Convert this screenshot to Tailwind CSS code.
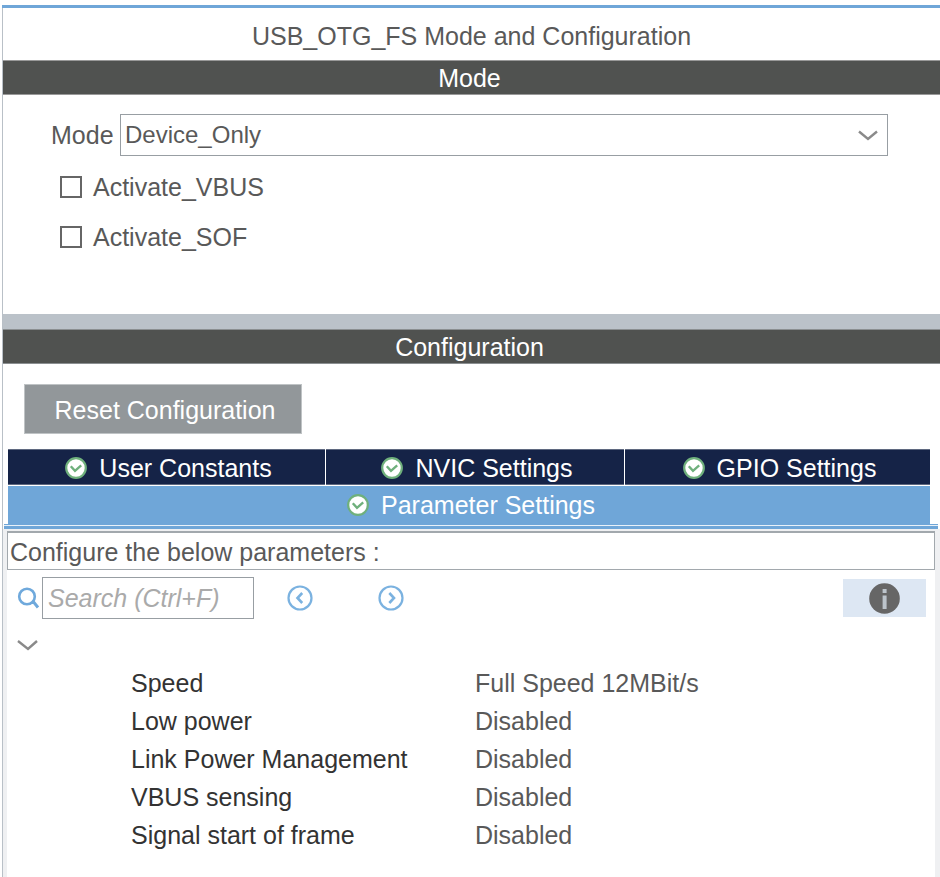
<!DOCTYPE html>
<html lang="en">
<head>
<meta charset="utf-8">
<title>USB_OTG_FS Mode and Configuration</title>
<script src="https://cdn.jsdelivr.net/npm/@tailwindcss/browser@4"></script>
</head>
<body class="bg-white">
<svg class="hidden" aria-hidden="true">
  <symbol id="check" viewBox="0 0 22 22">
    <circle cx="11" cy="11" r="9.8" fill="#fff" stroke="#6fb07c" stroke-width="2.2"/>
    <path d="M5.8 9.2 10 13.8 16.2 8.4" fill="none" stroke="#6fb07c" stroke-width="2.4"/>
  </symbol>
</svg>
<main class="mt-[5px] ml-[2px] flex min-h-[calc(100vh-5px)] flex-col border-t-3 border-t-[#6fa6d8] font-['Liberation_Sans',Arial,sans-serif] text-[25px] leading-[34px] text-[#595959]">
  <div class="flex grow flex-col border-l border-[#b9c0c7]">
    <h1 class="h-[52px] pt-[11px] text-center text-[25px]">USB_OTG_FS Mode and Configuration</h1>
    <section>
      <h2 class="h-[35px] border-y border-[#999] bg-[#505250] pr-1 text-center leading-[35px] text-white">Mode</h2>
      <div class="h-[219px] pt-[19px] pr-[52px] pl-12">
        <div class="flex items-center">
          <label for="mode" class="w-[69px] shrink-0">Mode</label>
          <div class="relative grow">
            <select id="mode" class="block h-[42px] w-full appearance-none border border-[#989ea3] bg-white pl-1 text-[24px]">
              <option>Device_Only</option>
            </select>
            <svg class="pointer-events-none absolute top-4 right-[10px]" width="20" height="12" viewBox="0 0 20 12" fill="none" stroke="#8a8a8a" stroke-width="2.4"><path d="M1 1.5 10 9 19 1.5"/></svg>
          </div>
        </div>
        <label class="mt-[14px] ml-[9px] flex w-fit items-center gap-[11px]">
          <input type="checkbox" class="size-[22px] appearance-none border-2 border-[#666] bg-white">Activate_VBUS</label>
        <label class="mt-4 ml-[9px] flex w-fit items-center gap-[11px]">
          <input type="checkbox" class="size-[22px] appearance-none border-2 border-[#666] bg-white">Activate_SOF</label>
      </div>
    </section>
    <div class="h-[15px] bg-[#bbc2c9]"></div>
    <section class="flex grow flex-col">
      <h2 class="h-[35px] border-y border-[#8b8f91] bg-[#505250] pr-1 text-center leading-[35px] text-white">Configuration</h2>
      <button class="mt-5 ml-[21px] h-[50px] w-[278px] border border-[#bfc3c5] bg-[#92979a] pt-[2px] pl-1 text-center text-white">Reset Configuration</button>
      <nav class="mt-[15px] mr-[10px] ml-[5px] grid grid-cols-[317fr_298fr_305fr] gap-x-px gap-y-px text-white" role="tablist">
        <button role="tab" class="flex h-9 items-center justify-center gap-3 border-y border-[#5f6980] bg-[#152347] pt-[2px] pl-1"><svg class="size-[22px]"><use href="#check"/></svg>User Constants</button>
        <button role="tab" class="flex h-9 items-center justify-center gap-3 border-y border-[#5f6980] bg-[#152347] pt-[2px] pl-1"><svg class="size-[22px]"><use href="#check"/></svg>NVIC Settings</button>
        <button role="tab" class="flex h-9 items-center justify-center gap-3 border-y border-[#5f6980] bg-[#152347] pt-[2px] pl-1"><svg class="size-[22px]"><use href="#check"/></svg>GPIO Settings</button>
        <button role="tab" aria-selected="true" class="col-span-3 flex h-[38px] items-center justify-center gap-3 bg-[#6fa6d8] pl-1"><svg class="size-[22px]"><use href="#check"/></svg>Parameter Settings</button>
      </nav>
      <div class="mr-[2px] ml-px h-[5px] border-t border-b-3 border-[#6fa6d8] bg-[#e8f1f9]"></div>
      <div class="flex grow flex-col border-t-2 border-r-5 border-l-4 border-[#eff0f2]">
        <p class="h-[39px] border border-t-2 border-[#a2a8ad] pl-[2px] leading-[38px]">Configure the below parameters :</p>
        <div class="mt-[7px] flex h-[42px] items-center">
          <label for="search" class="ml-[10px] flex w-[25px]" aria-label="Search">
            <svg width="24" height="24" viewBox="0 0 24 24" fill="none" stroke="#6fa9dc"><circle cx="10" cy="10.5" r="7.8" stroke-width="2.6"/><path d="M15 16.5H17L21 21.5" stroke-width="3"/></svg>
          </label>
          <input id="search" type="text" placeholder="Search (Ctrl+F)" class="h-[42px] w-[212px] border border-[#989ea3] bg-white px-[5px] italic placeholder:text-[#aaa]">
          <button class="ml-[33px]" aria-label="Previous match"><svg width="26" height="26" viewBox="0 0 26 26" fill="none" stroke="#7bb2e0"><circle cx="13" cy="13" r="11.5" stroke-width="2.2"/><path d="M15.2 8 10.5 13 15.2 18" stroke-width="2.6"/></svg></button>
          <button class="ml-[65px]" aria-label="Next match"><svg width="26" height="26" viewBox="0 0 26 26" fill="none" stroke="#7bb2e0"><circle cx="13" cy="13" r="11.5" stroke-width="2.2"/><path d="M11.3 8 16 13 11.3 18" stroke-width="2.6"/></svg></button>
          <button class="mr-[9px] ml-auto flex h-[38px] w-[83px] items-center justify-center bg-[#dde7f3]" aria-label="Information"><svg width="31" height="31" viewBox="0 0 31 31"><circle cx="15.5" cy="15.5" r="15.3" fill="#666"/><path d="M13.6 6h4v4h-4zM13.6 12.5h4V26h-4z" fill="#bcc4cb"/></svg></button>
        </div>
        <button class="mt-[20px] ml-[10px] w-5" aria-label="Collapse group"><svg width="22" height="12" viewBox="0 0 22 12" fill="none" stroke="#8a8a8a" stroke-width="2.4"><path d="M1 2 11 10 20 2"/></svg></button>
        <table class="mt-[13px] ml-[124px] w-[700px] table-fixed text-left">
          <tbody>
            <tr class="h-[38px]"><th scope="row" class="w-[344px] font-normal text-[#333]">Speed</th><td>Full Speed 12MBit/s</td></tr>
            <tr class="h-[38px]"><th scope="row" class="font-normal text-[#333]">Low power</th><td>Disabled</td></tr>
            <tr class="h-[38px]"><th scope="row" class="font-normal text-[#333]">Link Power Management</th><td>Disabled</td></tr>
            <tr class="h-[38px]"><th scope="row" class="font-normal text-[#333]">VBUS sensing</th><td>Disabled</td></tr>
            <tr class="h-[38px]"><th scope="row" class="font-normal text-[#333]">Signal start of frame</th><td>Disabled</td></tr>
          </tbody>
        </table>
      </div>
    </section>
  </div>
</main>
</body>
</html>
